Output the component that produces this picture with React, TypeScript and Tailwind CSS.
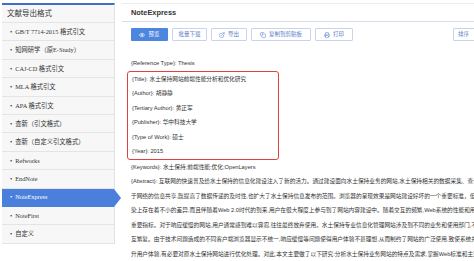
import { Eye, ExternalLink, Copy, Printer } from 'lucide-react'

const formats = [
  'GB/T 7714-2015 格式引文',
  '知网研学（原E-Study）',
  'CAJ-CD 格式引文',
  'MLA 格式引文',
  'APA 格式引文',
  '查新（引文格式）',
  '查新（自定义引文格式）',
  'Refworks',
  'EndNote',
  'NoteExpress',
  'NoteFirst',
  '自定义',
]

const boxed = [
  '{Title}: 水土保持网站前端性能分析和优化研究',
  '{Author}: 胡静静',
  '{Tertiary Author}: 黄正军',
  '{Publisher}: 华中科技大学',
  '{Type of Work}: 硕士',
  '{Year}: 2015',
]

const rest = [
  '{Keywords}: 水土保持;前端性能;优化;OpenLayers',
  '{Abstract}: 互联网的快速普及给水土保持的信息化建设注入了新的活力。通过建设面向水土保持业务的网站,水土保持相关的数据采集、查询与',
  '于网络的信息共享,既提高了数据传递的及时性,也扩大了水土保持信息发布的范围。浏览器的呈现效果是网站建设好坏的一个重要标准，但目前',
  '染上存在着不小的差异,而且伴随着Web 2.0时代的到来,用户在很大程度上参与到了网站内容建设中。随着交互的频繁,Web系统的性能和用户体',
  '重要指标。对于响应缓慢的网站,用户通常感到难以容忍,往往最终放弃使用。水土保持专业信息化管理网站涉及到不同的业务和使用部门,不仅',
  '互繁复。由于技术问题造成的不同客户端浏览器显示不统一,响应缓慢等问题使得用户体验不甚理想,从而制约了网站的广泛使用,致使系统并未',
  '升用户体验,有必要对原水土保持网站进行优化处理。对此,本文主要做了以下研究:分析水土保持业务网站的特点及需求,掌握Web标准和主流浏',
]

const sans = "font-['Liberation_Sans','Noto_Sans_CJK_SC',sans-serif]"

export default function App() {
  return (
    <div className="w-[474px] h-[261px] bg-white overflow-hidden flex pt-[3px] font-['Liberation_Serif','Noto_Sans_CJK_SC',serif]">
      {/* Sidebar */}
      <aside className="ml-[2px] w-[113px] shrink-0 self-start border-t-2 border-[#3f6fc2] border-r border-r-[#e2e2e2] bg-[#f7f7f7]">
        <div className="h-[18px] flex items-center px-[5px] text-[7.5px] text-[#333] border-b border-[#e4e4e4]">文献导出格式</div>
        {formats.map(f => {
          const active = f === 'NoteExpress'
          return (
            <div
              key={f}
              className={`relative h-[18.4px] flex items-center gap-[3px] pl-[8px] text-[6.3px] border-b ${
                active ? 'bg-[#4a7fdc] text-white border-[#4a7fdc]' : 'text-[#333] border-[#e4e4e4]'
              }`}
            >
              <span>•</span>
              <span>{f}</span>
              {active && (
                <span className="absolute right-[-7px] top-0 w-0 h-0 border-y-[9px] border-y-transparent border-l-[7px] border-l-[#4a7fdc]" />
              )}
            </div>
          )
        })}
      </aside>

      {/* Main */}
      <main className={`ml-[7px] flex-1 min-w-0 border-t border-[#ececec] ${sans}`}>
        <div className="h-[18px] flex items-center pl-[9px] border-b border-[#d8dce8] text-[7.4px] font-bold text-[#333]">
          NoteExpress
        </div>

        <div className="mt-[6px] pl-[9px] flex items-center gap-[4px] text-[5.5px] whitespace-nowrap">
          <div className="h-[13px] w-[37px] flex items-center justify-center gap-[3px] bg-[#4d86de] text-white rounded-[1px]">
            <Eye size={6} strokeWidth={2.4} />
            <span>预览</span>
          </div>
          <div className="h-[13px] w-[35px] flex items-center justify-center border border-[#c9d4ea] text-[#5d80c6] rounded-[1px]">批量下载</div>
          <div className="h-[13px] w-[36px] flex items-center justify-center gap-[3px] border border-[#c9d4ea] text-[#5d80c6] rounded-[1px]">
            <ExternalLink size={6} strokeWidth={2} />
            <span>导出</span>
          </div>
          <div className="h-[13px] w-[60px] flex items-center justify-center gap-[3px] border border-[#c9d4ea] text-[#5d80c6] rounded-[1px]">
            <Copy size={6} strokeWidth={2} />
            <span>复制到剪贴板</span>
          </div>
          <div className="h-[13px] w-[38px] flex items-center justify-center gap-[3px] border border-[#c9d4ea] text-[#5d80c6] rounded-[1px]">
            <Printer size={6} strokeWidth={2} />
            <span>打印</span>
          </div>
          <div className="ml-auto h-[13px] w-[26px] shrink-0 flex items-center pl-[4px] border border-[#c9d4ea] text-[#5d80c6] rounded-[1px] -mr-[5px]">排序</div>
        </div>

        <div className="mt-[15px] pl-[9px] text-[5.7px] leading-[14.5px] text-[#333] whitespace-nowrap overflow-hidden">
          <div>{'{Reference Type}: Thesis'}</div>
          <div className="-ml-[4px] w-[152px] pl-[4px] border-[1.5px] border-[#e0403e] rounded-[3px]">
            {boxed.map(l => (
              <div key={l}>{l}</div>
            ))}
          </div>
          {rest.map(l => (
            <div key={l}>{l}</div>
          ))}
        </div>
      </main>
    </div>
  )
}
